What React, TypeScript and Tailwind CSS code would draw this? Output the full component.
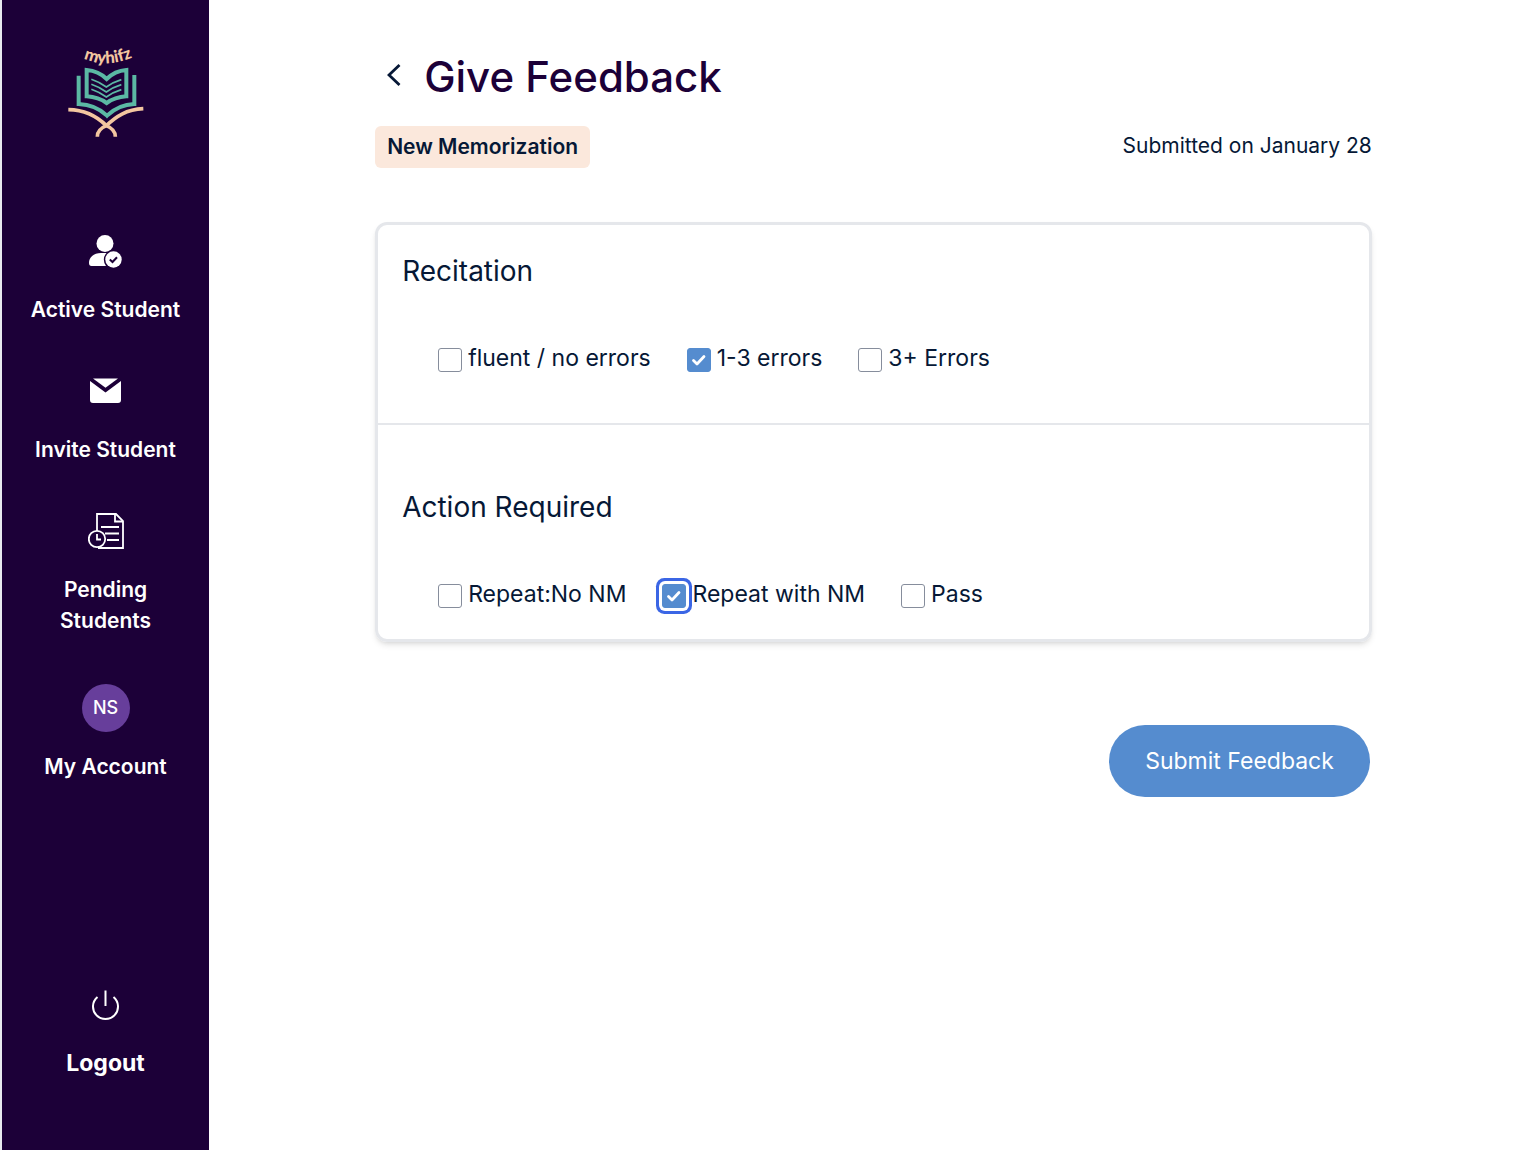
import type { ReactNode } from "react";
import { useState } from "react";

function Logo() {
  return (
    <svg className="h-[110px] w-[100px]" viewBox="2 0 300 330" fill="none" role="img" aria-label="myhifz">
      <path id="logo-curve" d="M85 70 Q155 102 240 64" />
      <text fill="#f3c6a0" className="font-['Lato',sans-serif] text-[50px] font-black">
        <textPath href="#logo-curve">myhifz</textPath>
      </text>
      <g stroke="#5bb8a4" strokeWidth="12">
        <path d="M94 105C120 107 140 118 154 132C168 118 187 107 213 105V184C187 186 168 194 154 204C140 194 120 186 94 184Z" />
        <path d="M70 122V207C102 208 132 220 155 242C178 220 208 208 237 207V120" />
      </g>
      <g stroke="#5bb8a4" strokeWidth="5">
        <path d="M108 133Q134 142 153 156Q172 142 198 134" />
        <path d="M108 148Q134 157 153 171Q172 157 198 149" />
        <path d="M108 163Q134 172 153 186Q172 172 198 164" />
      </g>
      <g stroke="#f3c6a0" strokeWidth="11">
        <path d="M39 224C92 225 126 245 153 272C172 280 180 290 180 305" />
        <path d="M264 221C213 223 181 245 153 272C134 280 126 290 126 305" />
      </g>
    </svg>
  );
}

function StudentIcon() {
  return (
    <svg className="size-9" viewBox="0 0 36 36" fill="none">
      <circle cx="17" cy="10.5" r="8.5" fill="#fff" />
      <path d="M1 30C1 24 6 20 13 20H18.5A10 10 0 0 0 18 33H3.5Q1 33 1 30Z" fill="#fff" />
      <circle cx="25.5" cy="26.5" r="8.2" fill="#fff" />
      <path d="M21.8 26.5L24.500 29L29 24.2" stroke="#1c0038" strokeWidth="2" />
    </svg>
  );
}

function MailIcon() {
  return (
    <svg className="size-9" viewBox="0 0 36 36" fill="#fff">
      <path d="M5 5.5H30L17.5 14.8Z" />
      <path d="M2 8L17.5 19.5L33 8V27Q33 30 30 30H5Q2 30 2 27Z" />
    </svg>
  );
}

function PendingIcon() {
  return (
    <svg className="size-9" viewBox="0 0 36 36" fill="none" stroke="#fff" strokeWidth="1.8">
      <path d="M9 18V1H28L35 8V35H10" />
      <path d="M27 1V8.5H35" />
      <path d="M13 14H31M17 20.5H31M19 27H31" />
      <circle cx="9" cy="26" r="8.2" />
      <path d="M9 21V26.500H13" />
    </svg>
  );
}

function PowerIcon() {
  return (
    <svg className="size-9" viewBox="0 0 36 36" fill="none" stroke="#fff" strokeWidth="2">
      <path d="M9.5 9A12.5 12.5 0 1 0 25.5 9" />
      <path d="M17.5 2.5V18" />
    </svg>
  );
}

function NavItem({ icon, label }: { icon: ReactNode; label: string }) {
  return (
    <a href="#" className="flex flex-col items-center gap-[25px] text-center text-[21px] leading-[31px] font-semibold text-white">
      {icon}
      <span>{label}</span>
    </a>
  );
}

type OptionProps = {
  label: string;
  checked: boolean;
  onSelect: () => void;
  autoFocus?: boolean;
};

function Option({ label, checked, onSelect, autoFocus }: OptionProps) {
  return (
    <label className="flex items-center gap-1.5 text-[23px] leading-9">
      <span className="mt-1 grid size-6 shrink-0">
        <input
          type="checkbox"
          checked={checked}
          onChange={onSelect}
          autoFocus={autoFocus}
          className="col-start-1 row-start-1 size-6 appearance-none rounded-[3px] border border-[#868d9c] bg-white outline-none checked:border-[#558ccf] checked:bg-[#558ccf] focus:ring-[3px] focus:ring-[#3b66e5] focus:ring-offset-[3px]"
        />
        {checked && (
          <svg className="pointer-events-none col-start-1 row-start-1 size-6" viewBox="0 0 24 24" fill="none">
            <path d="M6.5 12.5L10 16L17 8.5" stroke="#fff" strokeWidth="2.8" strokeLinecap="round" strokeLinejoin="round" />
          </svg>
        )}
      </span>
      {label}
    </label>
  );
}

const recitationOptions = ["fluent / no errors", "1-3 errors", "3+ Errors"];
const actionOptions = ["Repeat:No NM", "Repeat with NM", "Pass"];

export default function App() {
  const [recitation, setRecitation] = useState("1-3 errors");
  const [action, setAction] = useState("Repeat with NM");

  return (
    <div className="flex min-h-screen bg-white font-['Inter',sans-serif] text-[#061836]">
      <aside className="flex w-[209px] shrink-0 flex-col items-center border-l-2 border-[#e8eaf0] bg-[#1c0038] pt-[35px] pb-[69px]">
        <Logo />
        <nav className="mt-[88px] flex w-40 flex-col gap-12">
          <NavItem icon={<StudentIcon />} label="Active Student" />
          <NavItem icon={<MailIcon />} label="Invite Student" />
          <NavItem icon={<PendingIcon />} label="Pending Students" />
          <a href="#" className="flex flex-col items-center gap-[19px] text-[21px] leading-[31px] font-semibold text-white">
            <span className="flex size-12 items-center justify-center rounded-full bg-[#673e9b] text-lg font-medium">NS</span>
            My Account
          </a>
        </nav>
        <button type="button" className="mt-auto flex flex-col items-center gap-[21px] text-[23px] leading-9 font-bold text-white">
          <PowerIcon />
          Logout
        </button>
      </aside>

      <main className="flex-1">
        <form className="mx-auto w-3/4 pt-11" onSubmit={(e) => e.preventDefault()}>
          <div className="flex items-center gap-[23px] pl-3">
            <button type="button" aria-label="Back" className="-mt-1">
              <svg className="h-6 w-3.5" viewBox="0 0 14 24" fill="none" stroke="#061836" strokeWidth="2.8">
                <path d="M12.5 2L2 12L12.5 22" />
              </svg>
            </button>
            <h1 className="text-[42px] leading-[66px] font-medium text-[#1c0038]">Give Feedback</h1>
          </div>

          <div className="mt-4 flex items-start justify-between text-[21px]">
            <span className="rounded-md bg-[#fbe8dc] px-3 leading-[42px] font-semibold">New Memorization</span>
            <span className="leading-10">Submitted on January 28</span>
          </div>

          <div className="mt-[54px] rounded-xl border-3 border-[#e5e7eb] shadow-md">
            <fieldset className="border-b-2 border-[#e5e7eb] px-6 pt-6 pb-[47px]">
              <legend className="float-left w-full text-[28px] leading-[45px]">Recitation</legend>
              <div className="clear-both flex flex-wrap gap-x-9 pt-[46px] pl-9">
                {recitationOptions.map((o) => (
                  <Option key={o} label={o} checked={recitation === o} onSelect={() => setRecitation(o)} />
                ))}
              </div>
            </fieldset>
            <fieldset className="px-6 pt-[60px] pb-[27px]">
              <legend className="float-left w-full text-[28px] leading-[45px]">Action Required</legend>
              <div className="clear-both flex flex-wrap gap-x-9 pt-[46px] pl-9">
                {actionOptions.map((o) => (
                  <Option
                    key={o}
                    label={o}
                    checked={action === o}
                    onSelect={() => setAction(o)}
                    autoFocus={o === "Repeat with NM"}
                  />
                ))}
              </div>
            </fieldset>
          </div>

          <div className="mt-[83px] flex justify-end pr-0.5">
            <button type="submit" className="h-[72px] rounded-full bg-[#558ccf] px-9 text-[23px] text-white">
              Submit Feedback
            </button>
          </div>
        </form>
      </main>
    </div>
  );
}
